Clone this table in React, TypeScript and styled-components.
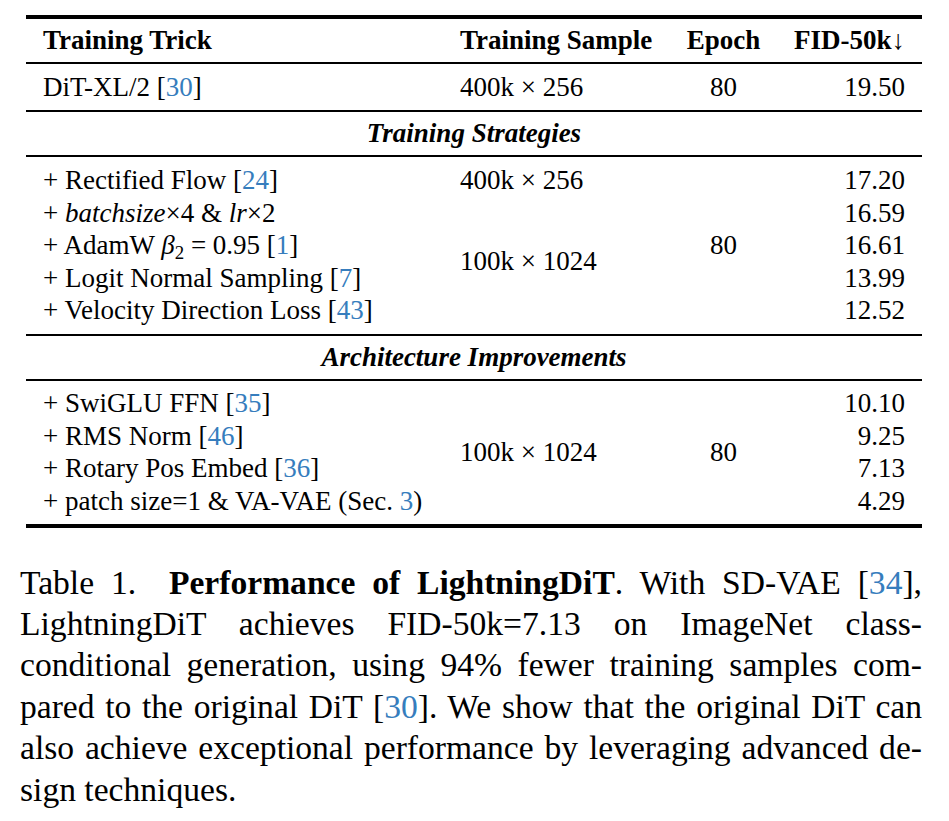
import React from "react";
import styled, { createGlobalStyle } from "styled-components";

const GlobalStyle = createGlobalStyle`
  html, body {
    margin: 0;
    padding: 0;
    background: #ffffff;
  }
  body {
    font-family: "Liberation Serif", "Times New Roman", serif;
    color: #000000;
  }
`;

const Page = styled.div`
  width: 949px;
  height: 821px;
  box-sizing: border-box;
  padding: 15px 27px 0 20px;
  overflow: hidden;
`;

const Table = styled.div`
  width: 896px;
  margin-left: 6px;
  display: flex;
  flex-direction: column;
  font-size: 27px;
`;

const Rule = styled.div<{ $thick?: boolean }>`
  height: ${(p) => (p.$thick ? 4 : 2)}px;
  background: #000000;
`;

const Grid = styled.div<{ $rowH: number; $pad?: number }>`
  display: grid;
  grid-template-columns: 417px 227px 107px 145px;
  grid-auto-rows: ${(p) => p.$rowH}px;
  line-height: ${(p) => p.$rowH}px;
  padding: ${(p) => p.$pad ?? 0}px 0;
`;

type CellProps = { $row?: number; $span?: number; $bold?: boolean };

const cellBase = (p: CellProps) => `
  grid-row: ${p.$row ?? 1} / span ${p.$span ?? 1};
  align-self: center;
  white-space: nowrap;
  font-weight: ${p.$bold ? 700 : 400};
`;

const TrickCell = styled.div<CellProps>`
  ${(p) => cellBase(p)}
  grid-column: 1;
  padding-left: 17px;
`;

const SampleCell = styled.div<CellProps>`
  ${(p) => cellBase(p)}
  grid-column: 2;
  padding-left: 17px;
`;

const EpochCell = styled.div<CellProps>`
  ${(p) => cellBase(p)}
  grid-column: 3;
  text-align: center;
`;

const FidCell = styled.div<CellProps>`
  ${(p) => cellBase(p)}
  grid-column: 4;
  text-align: right;
  padding-right: 17px;
`;

const SectionTitle = styled.div`
  height: 43px;
  line-height: 43px;
  text-align: center;
  font-weight: 700;
  font-style: italic;
`;

const Cite = styled.span`
  color: #367dbd;
`;

const Math = styled.i`
  font-style: italic;
`;

const Sub = styled.sub`
  font-size: 0.7em;
  vertical-align: -0.25em;
  line-height: 0;
`;

const Caption = styled.div`
  width: 902px;
  margin-top: 34px;
  font-size: 33.6px;
  line-height: 41.4px;
`;

const Line = styled.div<{ $last?: boolean }>`
  text-align: justify;
  text-align-last: ${(p) => (p.$last ? "left" : "justify")};
`;

const Label = styled.span`
  margin-right: 16px;
`;

const strategies: { trick: React.ReactNode; fid: string }[] = [
  { trick: <>+ Rectified Flow [<Cite>24</Cite>]</>, fid: "17.20" },
  {
    trick: (
      <>
        + <Math>batchsize</Math>×4 &amp; <Math>lr</Math>×2
      </>
    ),
    fid: "16.59",
  },
  {
    trick: (
      <>
        + AdamW <Math>β</Math>
        <Sub>2</Sub> = 0.95 [<Cite>1</Cite>]
      </>
    ),
    fid: "16.61",
  },
  { trick: <>+ Logit Normal Sampling [<Cite>7</Cite>]</>, fid: "13.99" },
  { trick: <>+ Velocity Direction Loss [<Cite>43</Cite>]</>, fid: "12.52" },
];

const architecture: { trick: React.ReactNode; fid: string }[] = [
  { trick: <>+ SwiGLU FFN [<Cite>35</Cite>]</>, fid: "10.10" },
  { trick: <>+ RMS Norm [<Cite>46</Cite>]</>, fid: "9.25" },
  { trick: <>+ Rotary Pos Embed [<Cite>36</Cite>]</>, fid: "7.13" },
  {
    trick: (
      <>
        + patch size=1 &amp; VA-VAE (Sec. <Cite>3</Cite>)
      </>
    ),
    fid: "4.29",
  },
];

export default function App() {
  return (
    <>
      <GlobalStyle />
      <Page>
        <Table>
          <Rule $thick />
          <Grid $rowH={43}>
            <TrickCell $bold>Training Trick</TrickCell>
            <SampleCell $bold>Training Sample</SampleCell>
            <EpochCell $bold>Epoch</EpochCell>
            <FidCell $bold>FID-50k↓</FidCell>
          </Grid>
          <Rule />
          <Grid $rowH={46}>
            <TrickCell>
              DiT-XL/2 [<Cite>30</Cite>]
            </TrickCell>
            <SampleCell>400k × 256</SampleCell>
            <EpochCell>80</EpochCell>
            <FidCell>19.50</FidCell>
          </Grid>
          <Rule />
          <SectionTitle>Training Strategies</SectionTitle>
          <Rule />
          <Grid $rowH={32.5} $pad={7}>
            {strategies.map((s, i) => (
              <TrickCell key={`t${i}`} $row={i + 1}>
                {s.trick}
              </TrickCell>
            ))}
            <SampleCell $row={1}>400k × 256</SampleCell>
            <SampleCell $row={2} $span={4}>
              100k × 1024
            </SampleCell>
            <EpochCell $row={1} $span={5}>
              80
            </EpochCell>
            {strategies.map((s, i) => (
              <FidCell key={`f${i}`} $row={i + 1}>
                {s.fid}
              </FidCell>
            ))}
          </Grid>
          <Rule />
          <SectionTitle>Architecture Improvements</SectionTitle>
          <Rule />
          <Grid $rowH={32.5} $pad={6.5}>
            {architecture.map((s, i) => (
              <TrickCell key={`t${i}`} $row={i + 1}>
                {s.trick}
              </TrickCell>
            ))}
            <SampleCell $row={1} $span={4}>
              100k × 1024
            </SampleCell>
            <EpochCell $row={1} $span={4}>
              80
            </EpochCell>
            {architecture.map((s, i) => (
              <FidCell key={`f${i}`} $row={i + 1}>
                {s.fid}
              </FidCell>
            ))}
          </Grid>
          <Rule $thick />
        </Table>
        <Caption>
          <Line>
            <Label>Table 1.</Label> <b>Performance of LightningDiT</b>. With SD-VAE [<Cite>34</Cite>],
          </Line>
          <Line>LightningDiT achieves FID-50k=7.13 on ImageNet class-</Line>
          <Line>conditional generation, using 94% fewer training samples com-</Line>
          <Line>
            pared to the original DiT [<Cite>30</Cite>]. We show that the original DiT can
          </Line>
          <Line>also achieve exceptional performance by leveraging advanced de-</Line>
          <Line $last>sign techniques.</Line>
        </Caption>
      </Page>
    </>
  );
}
